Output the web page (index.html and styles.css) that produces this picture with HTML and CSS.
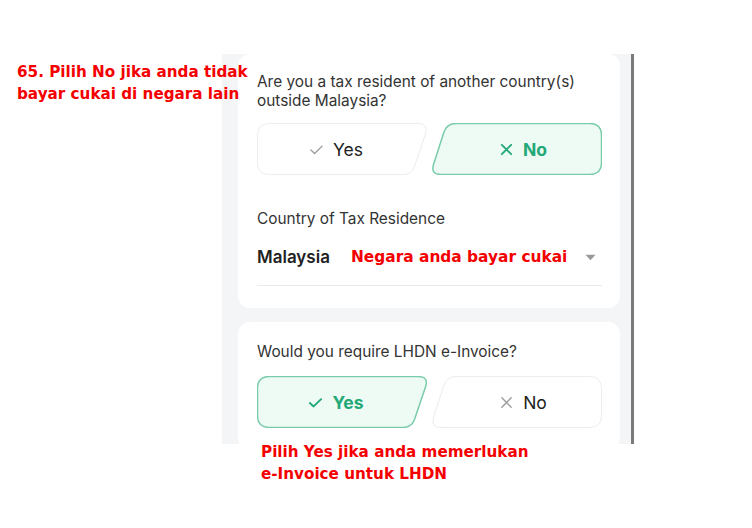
FILE: index.html
```html
<!doctype html>
<html lang="ms">
<head>
  <meta charset="UTF-8">
  <meta name="viewport" content="width=device-width, initial-scale=1.0">
  <title>Tax residence &amp; e-Invoice</title>
  <link rel="stylesheet" href="styles.css">
</head>
<body>

<div class="Page">
  <div class="Phone">
    <section class="Card">
      <p class="Card-question">Are you a tax resident of another country(s)<br>outside Malaysia?</p>
      <div class="Choice">
        <div class="Choice-option Choice-option--first">
          <svg class="Choice-shape" viewBox="0 0 172 52" aria-hidden="true">
            <path d="M12.5 0.5 H161 Q172 0.5 168.5 11 L157.5 43.5 Q154.5 51.5 146 51.5 H12.5 Q0.5 51.5 0.5 39.5 V12.5 Q0.5 0.5 12.5 0.5 Z"/>
          </svg>
          <svg class="Choice-icon" viewBox="0 0 16 16" aria-hidden="true"><path d="M2 8.6 L6 12.2 L14 4.4"/></svg>
          <span class="Choice-label">Yes</span>
        </div>
        <div class="Choice-option Choice-option--last is-selected">
          <svg class="Choice-shape" viewBox="0 0 172 52" aria-hidden="true">
            <path d="M26 0.5 H159.5 Q171.5 0.5 171.5 12.5 V39.5 Q171.5 51.5 159.5 51.5 H11 Q0.5 51.5 3.5 41.5 L14 9 Q17 0.5 26 0.5 Z"/>
          </svg>
          <svg class="Choice-icon" viewBox="0 0 16 16" aria-hidden="true"><path d="M3 3 L13 13 M13 3 L3 13"/></svg>
          <span class="Choice-label">No</span>
        </div>
      </div>

      <p class="Card-label">Country of Tax Residence</p>
      <div class="Select">
        <span class="Select-value">Malaysia</span>
        <span class="Note Note--inline">Negara anda bayar cukai</span>
        <svg class="Select-caret" viewBox="0 0 12 7" aria-hidden="true"><path d="M0.5 0.5 H11.5 L6 6.5 Z"/></svg>
      </div>
    </section>

    <section class="Card Card--next">
      <p class="Card-question">Would you require LHDN e-Invoice?</p>
      <div class="Choice">
        <div class="Choice-option Choice-option--first is-selected">
          <svg class="Choice-shape" viewBox="0 0 172 52" aria-hidden="true">
            <path d="M12.5 0.5 H161 Q172 0.5 168.5 11 L157.5 43.5 Q154.5 51.5 146 51.5 H12.5 Q0.5 51.5 0.5 39.5 V12.5 Q0.5 0.5 12.5 0.5 Z"/>
          </svg>
          <svg class="Choice-icon" viewBox="0 0 16 16" aria-hidden="true"><path d="M2 8.6 L6 12.2 L14 4.4"/></svg>
          <span class="Choice-label">Yes</span>
        </div>
        <div class="Choice-option Choice-option--last">
          <svg class="Choice-shape" viewBox="0 0 172 52" aria-hidden="true">
            <path d="M26 0.5 H159.5 Q171.5 0.5 171.5 12.5 V39.5 Q171.5 51.5 159.5 51.5 H11 Q0.5 51.5 3.5 41.5 L14 9 Q17 0.5 26 0.5 Z"/>
          </svg>
          <svg class="Choice-icon" viewBox="0 0 16 16" aria-hidden="true"><path d="M3 3 L13 13 M13 3 L3 13"/></svg>
          <span class="Choice-label">No</span>
        </div>
      </div>
    </section>
  </div>

  <p class="Note Note--left">65. Pilih No jika anda tidak<br>bayar cukai di negara lain</p>
  <p class="Note Note--bottom">Pilih Yes jika anda memerlukan<br>e-Invoice untuk LHDN</p>
</div>

</body>
</html>
```

FILE: styles.css
```css
body {
  margin: 0;
  background-color: white;
  color: #222;
  font-family: Inter, "Noto Sans", sans-serif;
}

p {
  margin: 0;
}

.Page {
  position: relative;
  width: 752px;
  height: 528px;
  overflow: hidden;
}

/* red annotations */
.Note {
  color: #f40000;
  font-family: "DejaVu Sans", Verdana, sans-serif;
  font-weight: bold;
  font-size: 15.2px;
  line-height: 22px;
}

.Note--left {
  position: absolute;
  z-index: 1;
  left: 17px;
  top: 61px;
}

.Note--bottom {
  position: absolute;
  z-index: 1;
  left: 261px;
  top: 441px;
}

.Note--inline {
  margin-left: 21px;
  font-size: 15.4px;
}

/* phone screenshot */
.Phone {
  position: absolute;
  left: 222px;
  top: 54px;
  width: 409px;
  height: 390px;
  overflow: hidden;
  background-color: #f4f5f7;
  border-right: 3px solid #7b7b7b;
}

.Card {
  width: 345px;
  margin-left: 16px;
  padding: 18px 18px 22px 19px;
  border-radius: 12px;
  background-color: white;
}

.Card--next {
  margin-top: 14px;
  padding-top: 20px;
}

.Card-question,
.Card-label {
  color: #333;
  font-size: 15.4px;
  line-height: 19px;
}

.Card-label {
  margin-top: 34px;
}

.Choice {
  display: flex;
  margin-top: 13px;
  column-gap: 1px;
}

.Card--next .Choice {
  margin-top: 15px;
}

.Choice-option {
  position: relative;
  display: flex;
  align-items: center;
  justify-content: center;
  column-gap: 9px;
  width: 172px;
  height: 52px;
  color: #222;
  font-size: 17.5px;
}

.Choice-option--first {
  padding-right: 14px;
  box-sizing: border-box;
}

.Choice-option--last {
  padding-left: 14px;
  box-sizing: border-box;
}

.Choice-shape {
  position: absolute;
  inset: 0;
  width: 100%;
  height: 100%;
  fill: white;
  stroke: #ececec;
  stroke-width: 1;
}

.Choice-icon {
  position: relative;
  width: 15px;
  height: 15px;
  fill: none;
  stroke: #9a9a9a;
  stroke-width: 1.4;
  stroke-linecap: round;
  stroke-linejoin: round;
}

.Choice-label {
  position: relative;
}

.Choice-option.is-selected {
  color: #22a977;
  font-weight: 700;
}

.Choice-option.is-selected .Choice-shape {
  fill: #eefaf4;
  stroke: #78cca9;
  stroke-width: 1.5;
}

.Choice-option.is-selected .Choice-icon {
  stroke: #22a977;
  stroke-width: 2;
}

.Select {
  display: flex;
  align-items: center;
  height: 28px;
  margin-top: 15px;
  padding-bottom: 14px;
  border-bottom: 1px solid #ebebeb;
}

.Select-value {
  color: #222;
  font-size: 17px;
  font-weight: 600;
}

.Select-caret {
  width: 11px;
  height: 7px;
  margin-left: auto;
  margin-right: 6px;
  fill: #9a9a9a;
}
```
